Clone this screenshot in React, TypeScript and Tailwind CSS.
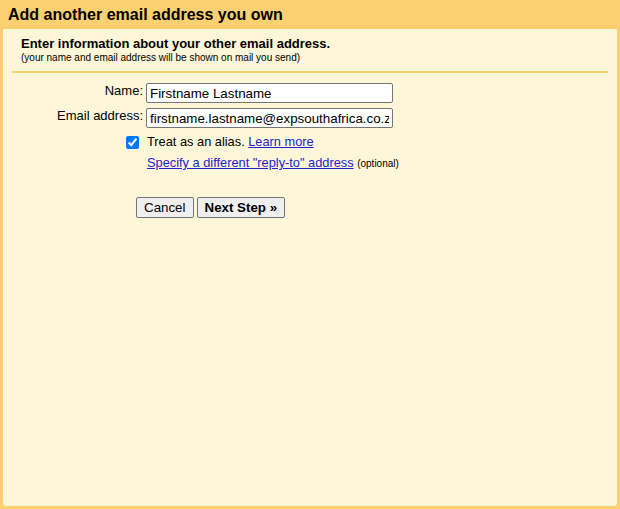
export default function App() {
  return (
    <div className="w-[620px] h-[509px] bg-[#fad070] flex flex-col font-['Liberation_Sans',Arial,sans-serif] text-black">
      {/* Title bar */}
      <div className="h-[29px] shrink-0 px-[8px] pt-[5px]">
        <h1 className="text-[16px] leading-[19px] font-bold">Add another email address you own</h1>
      </div>

      {/* Panel */}
      <div className="flex-1 mx-[3px] mb-[3px] bg-[#fef6d9] rounded-b-[3px]">
        <div className="mx-[9px] pt-[7px] pb-[7px] border-b-2 border-[#fad070]">
          <div className="pl-[9px]">
            <p className="text-[13px] leading-[15px] font-bold">Enter information about your other email address.</p>
            <p className="text-[10px] leading-[12px] mt-[1px]">(your name and email address will be shown on mail you send)</p>
          </div>
        </div>

        {/* Form */}
        <div className="flex flex-col mt-[10px] text-[13px]">
          <div className="flex items-start">
            <label className="w-[140px] text-right leading-[16px]">Name:</label>
            <input
              className="ml-[3px] w-[247px] h-[20px] px-[3px] bg-white border border-[#767676] rounded-[2px] text-[13.33px] outline-none"
              defaultValue="Firstname Lastname"
            />
          </div>
          <div className="flex items-start mt-[5px]">
            <label className="w-[140px] text-right leading-[16px]">Email address:</label>
            <input
              className="ml-[3px] w-[247px] h-[20px] px-[3px] bg-white border border-[#767676] rounded-[2px] text-[13.33px] outline-none"
              defaultValue="firstname.lastname@expsouthafrica.co.za"
            />
          </div>
          <div className="flex items-center mt-[6px] h-[16px]">
            <div className="w-[136px] flex justify-end">
              <input type="checkbox" defaultChecked className="w-[13px] h-[13px] m-0 accent-[#0075ff]" />
            </div>
            <span className="ml-[8px] text-[12.8px]">
              Treat as an alias.{" "}
              <a href="#" className="text-[#2222cc] underline">Learn more</a>
            </span>
          </div>
          <div className="flex items-center mt-[5px] h-[16px]">
            <span className="ml-[144px] text-[12.8px]">
              <a href="#" className="text-[#2222cc] underline">Specify a different "reply-to" address</a>{" "}
              <span className="text-[10px]">(optional)</span>
            </span>
          </div>

          {/* Buttons */}
          <div className="flex gap-[3px] ml-[133px] mt-[26px]">
            <button className="h-[21px] px-[7px] bg-[#efefef] border border-[#767676] rounded-[2px] text-[13.33px] leading-[17px]">
              Cancel
            </button>
            <button className="h-[21px] px-[7px] bg-[#efefef] border border-[#767676] rounded-[2px] text-[13.33px] leading-[17px] font-bold">
              Next Step »
            </button>
          </div>
        </div>
      </div>
    </div>
  );
}
